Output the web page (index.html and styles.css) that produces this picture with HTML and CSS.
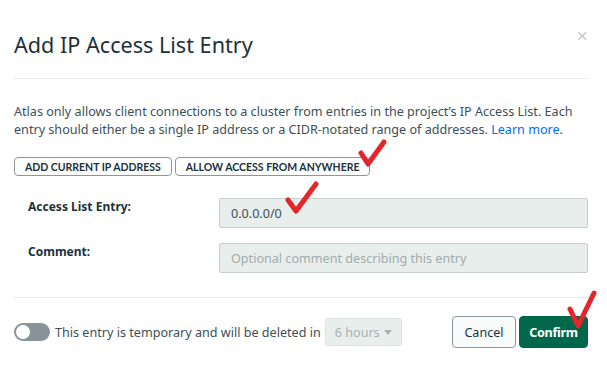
FILE: index.html
```html
<!DOCTYPE html>
<html lang="en">
<head>
    <meta charset="UTF-8">
    <title>Add IP Access List Entry</title>
    <link rel="stylesheet" href="styles.css">
</head>
<body>
    <div class="modal">
        <div class="modal-header">
            <h2 class="modal-title">Add IP Access List Entry</h2>
            <span class="close">&times;</span>
        </div>

        <p class="intro">Atlas only allows client connections to a cluster from entries in the project’s IP Access List. Each entry should either be a single IP address or a CIDR-notated range of addresses. <a href="#">Learn more</a>.</p>

        <div class="quick-buttons">
            <button class="btn-small">ADD CURRENT IP ADDRESS</button>
            <button class="btn-small">ALLOW ACCESS FROM ANYWHERE</button>
        </div>

        <div class="form">
            <div class="form-row">
                <label for="entry">Access List Entry:</label>
                <input id="entry" type="text" value="0.0.0.0/0">
            </div>
            <div class="form-row">
                <label for="comment">Comment:</label>
                <input id="comment" type="text" placeholder="Optional comment describing this entry">
            </div>
        </div>

        <div class="modal-footer">
            <span class="toggle"><span class="knob"></span></span>
            <span class="temp-text">This entry is temporary and will be deleted in</span>
            <span class="select">6 hours <span class="caret"></span></span>
            <button class="btn btn-cancel">Cancel</button>
            <button class="btn btn-confirm">Confirm</button>
        </div>
    </div>

    <!-- red check marks drawn over the screenshot -->
    <svg class="mark mark-1" width="30" height="30" viewBox="0 0 30 30"><path d="M3 14 L10 25 L26 3" /></svg>
    <svg class="mark mark-2" width="40" height="40" viewBox="0 0 40 40"><path d="M5 20 L13 31 L33 4" /></svg>
    <svg class="mark mark-3" width="40" height="52" viewBox="0 0 40 52"><path d="M6 19 L14 36 L30 3" /></svg>
</body>
</html>
```

FILE: styles.css
```css
body {
    margin: 0;
    background: #fff;
    font-family: "Noto Sans", Arial, sans-serif;
    color: #3d4f58;
}
.modal {
    padding: 0 19px 0 14px;
}
.modal-header {
    display: flex;
    justify-content: space-between;
    align-items: flex-start;
    padding: 29px 0 17px;
    border-bottom: 1px solid #e8edeb;
}
.modal-title {
    margin: 0;
    font-size: 21.6px;
    line-height: 32px;
    font-weight: normal;
    color: #21313c;
}
.close {
    margin-top: -3px;
    font-size: 20px;
    line-height: 20px;
    color: #c8cccc;
}
.intro {
    margin: 24px 0 0;
    font-size: 12.6px;
    line-height: 18px;
}
.intro a {
    color: #016bf8;
    text-decoration: none;
}
.quick-buttons {
    display: flex;
    gap: 3px;
    margin-top: 18px;
}
.btn-small {
    height: 19px;
    padding: 0 10px;
    border: 1px solid #89979b;
    border-radius: 4px;
    background: #fff;
    font-family: Lato, sans-serif;
    font-size: 10.5px;
    font-weight: bold;
    color: #21313c;
}
.form {
    display: flex;
    flex-direction: column;
    gap: 15px;
    margin-top: 22px;
}
.form-row {
    display: flex;
    align-items: flex-start;
}
.form-row label {
    width: 191px;
    padding-left: 14px;
    font-size: 12px;
    font-weight: bold;
    line-height: 18px;
    color: #21313c;
}
.form-row input {
    flex: 1;
    box-sizing: border-box;
    height: 30px;
    padding: 0 11px;
    border: 1px solid #c8cecd;
    border-radius: 2px;
    background: #e7eeec;
    font-family: inherit;
    font-size: 12.6px;
    color: #3d4f58;
}
.form-row input::placeholder {
    color: #a3abab;
}
.modal-footer {
    display: flex;
    align-items: center;
    margin-top: 24px;
    padding-top: 18px;
    border-top: 1px solid #e8edeb;
}
.toggle {
    box-sizing: border-box;
    width: 36px;
    height: 18px;
    padding: 1px;
    border-radius: 9px;
    background: #889397;
}
.knob {
    display: block;
    box-sizing: border-box;
    width: 16px;
    height: 16px;
    border-radius: 50%;
    background: #fff;
    border: 1px solid #889397;
}
.temp-text {
    margin-left: 5px;
    font-size: 12.6px;
    color: #3d4f58;
}
.select {
    display: flex;
    justify-content: space-between;
    box-sizing: border-box;
    width: 77px;
    height: 28px;
    margin-left: 4px;
    padding: 5px 9px;
    border: 1px solid #dde3e1;
    border-radius: 3px;
    background: #e7eeec;
    font-size: 12.6px;
    color: #aab1b1;
}
.caret {
    margin-top: 6px;
    border-left: 4px solid transparent;
    border-right: 4px solid transparent;
    border-top: 5px solid #aab1b1;
    height: 0;
}
.btn {
    height: 32px;
    border-radius: 4px;
    font-family: inherit;
    font-size: 12.6px;
}
.btn-cancel {
    width: 64px;
    margin-left: auto;
    border: 1px solid #89979b;
    background: #f9fbfa;
    color: #21313c;
}
.btn-confirm {
    width: 69px;
    padding: 0;
    margin-left: 3px;
    border: 1px solid #00684a;
    background: #00684a;
    color: #fff;
    font-weight: bold;
    letter-spacing: -0.3px;
}
.mark {
    position: absolute;
    fill: none;
    stroke: #e5252a;
    stroke-width: 5;
    stroke-linecap: round;
    stroke-linejoin: round;
}
.mark-1 { left: 358px; top: 139px; }
.mark-2 { left: 283px; top: 180px; }
.mark-3 { left: 564px; top: 290px; }
```
